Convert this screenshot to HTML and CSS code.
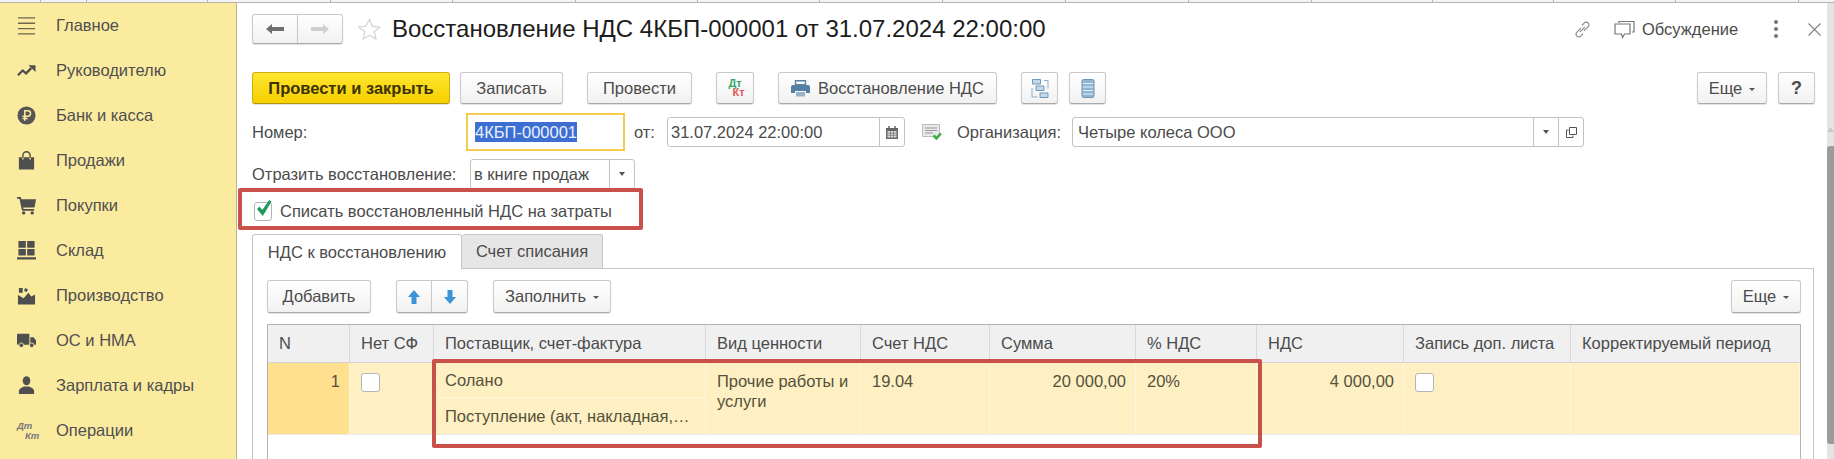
FILE: index.html
```html
<!DOCTYPE html>
<html lang="ru">
<head>
<meta charset="utf-8">
<title>Восстановление НДС</title>
<link rel="stylesheet" href="styles.css">
</head>
<body>
<div class="app">
  <div class="strip"><i></i><i></i><i></i><i></i><i></i><i></i><i></i><i></i><i></i><i></i><i></i><i></i><i></i><i></i><i></i><i></i></div>
  <div class="main">
    <nav class="side">
      <a class="nav"><svg class="ni" viewBox="0 0 20 20"><path d="M1 2h18M1 7.600h18M1 13.200h18M1 18.800h18" stroke="#6b6850" stroke-width="1.400" fill="none"/></svg>Главное</a>
      <a class="nav"><svg class="ni" viewBox="0 0 20 20"><path d="M1 15l5-5 3.500 3L15 7.500" stroke="#4f4f4f" stroke-width="2.400" fill="none"/><path d="M12 4.500H19.500V11.500z" fill="#4f4f4f"/></svg>Руководителю</a>
      <a class="nav"><svg class="ni" viewBox="0 0 20 20"><circle cx="10" cy="10" r="9.500" fill="#555"/><path d="M8.200 15.500V5h3.200a2.800 2.800 0 0 1 0 5.700H5.800M5.800 13.200h5.400" stroke="#fbeb9f" stroke-width="1.600" fill="none"/></svg>Банк и касса</a>
      <a class="nav"><svg class="ni" viewBox="0 0 20 20"><path d="M2 6.500h3.500V9h1.400V6.500h6.200V9h1.400V6.500H18v13H2z" fill="#4f4f4f"/><path d="M6.200 7V4.500a3.800 3.800 0 0 1 7.600 0V7" stroke="#4f4f4f" stroke-width="1.500" fill="none"/></svg>Продажи</a>
      <a class="nav"><svg class="ni" viewBox="0 0 20 20"><path d="M0 1h4l.6 2.500H20l-1.500 8.500H6.500l.4 1.800H18V15.500H5.300L2.600 2.800H0z" fill="#4f4f4f"/><circle cx="7" cy="17.800" r="1.800" fill="#4f4f4f"/><circle cx="16" cy="17.800" r="1.800" fill="#4f4f4f"/></svg>Покупки</a>
      <a class="nav"><svg class="ni" viewBox="0 0 20 20"><path d="M1.500 0h7.800v7h-7.800zM10.700 0h7.800v7h-7.800zM1.500 8.300h7.800v7h-7.800zM10.700 8.300h7.800v7h-7.800zM0 17.200h20v2.200H0z" fill="#4f4f4f"/></svg>Склад</a>
      <a class="nav"><svg class="ni" viewBox="0 0 20 20"><path d="M1 9.500l6 3.500 5-6 3 4 4-2v10.500H1z" fill="#4f4f4f"/><path d="M2 2h4v5H2zM8.500 2l3 1.500-1.500 3-2.500-1.500z" fill="#4f4f4f"/></svg>Производство</a>
      <a class="nav"><svg class="ni" viewBox="0 0 20 20"><path d="M.8 3h12.200v11.500H.8a.8.8 0 0 1-.8-.8V3.800A.8.8 0 0 1 .8 3zM14 6.500h3.500L20 10v4.500h-6z" fill="#4f4f4f"/><circle cx="4.500" cy="15" r="2.400" fill="#4f4f4f" stroke="#fbeb9f" stroke-width=".9"/><circle cx="15.500" cy="15" r="2.400" fill="#4f4f4f" stroke="#fbeb9f" stroke-width=".9"/></svg>ОС и НМА</a>
      <a class="nav"><svg class="ni" viewBox="0 0 20 20"><ellipse cx="10" cy="5" rx="4" ry="4.800" fill="#4f4f4f"/><path d="M2 18.500v-3c0-2 3-3.500 5.500-4.500h5c2.500 1 5.500 2.500 5.500 4.500v3a.5.5 0 0 1-.5.5h-15z" fill="#4f4f4f"/></svg>Зарплата и кадры</a>
      <a class="nav"><span class="dk dk-grey"><b>Дт</b><b>Кт</b></span>Операции</a>
    </nav>
    <section class="content">
      <header class="head">
        <div class="split">
          <button class="btn nb"><svg viewBox="0 0 18 12" class="arr"><path d="M0 6l6-5v3h12v4H6v3z" fill="#6e6e6e"/></svg></button>
          <button class="btn nb"><svg viewBox="0 0 18 12" class="arr"><path d="M18 6l-6-5v3H0v4h12v3z" fill="#cfcfcf"/></svg></button>
        </div>
        <svg class="star" viewBox="0 0 22 22"><path d="M11 1.500l2.800 6.500 7 .6-5.300 4.600 1.600 6.900-6.100-3.700-6.100 3.700 1.600-6.900L.2 8.600l7-.6z" fill="none" stroke="#d4d4d4" stroke-width="1.200"/></svg>
        <h1 class="title">Восстановление НДС 4КБП-000001 от 31.07.2024 22:00:00</h1>
        <div class="head-right">
          <svg class="hlink" viewBox="0 0 20 20"><path d="M8.500 8.500l-5 5a3 3 0 0 0 4 4l3-3M11.500 11.500l5-5a3 3 0 0 0-4-4l-3 3M7.500 12.500l5-5" fill="none" stroke="#8a8a8a" stroke-width="1.200"/></svg>
          <svg class="hchat" viewBox="0 0 21 19"><path d="M5 3V1.500h15V12h-2" fill="none" stroke="#777" stroke-width="1.200"/><path d="M1 4h15v10H10.500l-2 3.500-1-3.500H1z" fill="none" stroke="#777" stroke-width="1.200"/></svg>
          <span class="disc">Обсуждение</span>
          <span class="dots"><i></i><i></i><i></i></span>
          <svg class="close" viewBox="0 0 13 13"><path d="M.5.500l12 12M12.500.500l-12 12" stroke="#808080" stroke-width="1.100"/></svg>
        </div>
      </header>

      <div class="toolbar">
        <button class="btn primary w-post">Провести и закрыть</button>
        <button class="btn w-save">Записать</button>
        <button class="btn w-conduct">Провести</button>
        <button class="btn w-dk"><span class="dk dk-color"><b>Дт</b><b>Кт</b></span></button>
        <button class="btn w-print"><svg class="printer" viewBox="0 0 19 17"><path d="M4.500 .7h10v4h-10z" fill="none" stroke="#5e7f9f" stroke-width="1.400"/><path d="M2 5h15a2 2 0 0 1 2 2v6h-4v-2H4v2H0V7a2 2 0 0 1 2-2z" fill="#5580a6"/><path d="M5 12h9v4.500H5z" fill="#9ab2c8"/></svg>Восстановление НДС</button>
        <button class="btn w-icon"><svg class="ti" viewBox="0 0 18 19"><path d="M1.500.500h8v4.500h-8zM5 7h8v4.500H5zM9 14h8v4.500H9z" fill="#c3d8e9" stroke="#6b9abf"/><path d="M13 1.500h4v8M1 9v9h5.500" fill="none" stroke="#8cb0cc"/></svg></button>
        <button class="btn w-icon2"><svg class="ti" viewBox="0 0 18 19"><rect x="3" y=".5" width="12" height="18" rx="1.500" fill="#94b5d0" stroke="#6f96b6"/><path d="M4 4.500h10M4 8h10M4 11.500h10M4 15h10" stroke="#e4edf4"/></svg></button>
        <span class="tb-right">
          <button class="btn w-more">Еще<i class="caret"></i></button>
          <button class="btn w-help">?</button>
        </span>
      </div>

      <div class="form-row r1">
        <label class="lbl l-num">Номер:</label>
        <div class="num-input"><span class="sel">4КБП-000001</span></div>
        <label class="lbl l-from">от:</label>
        <div class="field f-date"><span class="val">31.07.2024 22:00:00</span><span class="cell"><svg class="cal" viewBox="0 0 12 13"><path d="M0 2h12v11H0z" fill="#666"/><path d="M3 0v2M9 0v2" stroke="#666" stroke-width="1.500"/><path d="M1.500 5h9v6.500h-9z" fill="#d8d8d8"/><path d="M1.500 7.200h9M1.500 9.300h9M4.500 5v6.500M7.500 5v6.500" stroke="#666" stroke-width=".6"/></svg></span></div>
        <svg class="doc-ok" viewBox="0 0 20 17"><path d="M.500.500h17v12H.500z" fill="#e9e9e9" stroke="#bbb"/><path d="M3 4h12M3 6.500h12M3 9h8" stroke="#999"/><path d="M10.500 12.500l2-2 2 2 3.500-4 1.800 1.800-5.300 6z" fill="#3fae49"/></svg>
        <label class="lbl l-org">Организация:</label>
        <div class="field f-org"><span class="val">Четыре колеса ООО</span><span class="cell"><i class="tri"></i></span><span class="cell"><svg class="open" viewBox="0 0 11 11"><path d="M3.500.500h7v7h-7z" fill="none" stroke="#555"/><path d="M2.500 3H.500v7.500H7V8.500" fill="none" stroke="#555"/></svg></span></div>
      </div>

      <div class="form-row r2">
        <label class="lbl l-refl">Отразить восстановление:</label>
        <div class="field f-refl"><span class="val">в книге продаж</span><span class="cell"><i class="tri"></i></span></div>
      </div>

      <div class="check-row">
        <span class="cb"><svg class="tick" viewBox="0 0 16 17"><path d="M1 9l2.500-2.500L6.300 10 13.200 0 15.500 1.500 6.800 16z" fill="#1d9a58"/></svg></span>
        <span class="lbl">Списать восстановленный НДС на затраты</span>
      </div>

      <div class="tabs">
        <span class="tab active">НДС к восстановлению</span>
        <span class="tab">Счет списания</span>
      </div>
      <div class="panel">
        <div class="tbl-bar">
          <button class="btn w-add">Добавить</button>
          <div class="split s2">
            <button class="btn ud"><svg class="updown" viewBox="0 0 12 14"><path d="M6 0l6 7H8.500v7h-5V7H0z" fill="#3c93d6"/></svg></button>
            <button class="btn ud"><svg class="updown" viewBox="0 0 12 14"><path d="M6 14l6-7H8.500V0h-5v7H0z" fill="#3c93d6"/></svg></button>
          </div>
          <button class="btn w-fill">Заполнить<i class="caret"></i></button>
          <button class="btn w-more2">Еще<i class="caret"></i></button>
        </div>
        <div class="grid">
          <div class="th">N</div>
          <div class="th">Нет СФ</div>
          <div class="th">Поставщик, счет-фактура</div>
          <div class="th">Вид ценности</div>
          <div class="th">Счет НДС</div>
          <div class="th">Сумма</div>
          <div class="th">% НДС</div>
          <div class="th">НДС</div>
          <div class="th">Запись доп. листа</div>
          <div class="th">Корректируемый период</div>

          <div class="td num cur">1</div>
          <div class="td chk"><span class="box"></span></div>
          <div class="td stack"><span class="sub">Солано</span><span class="sub">Поступление (акт, накладная,…</span></div>
          <div class="td">Прочие работы и услуги</div>
          <div class="td">19.04</div>
          <div class="td num">20 000,00</div>
          <div class="td">20%</div>
          <div class="td num">4 000,00</div>
          <div class="td chk"><span class="box"></span></div>
          <div class="td"></div>
        </div>
      </div>
    </section>
    <aside class="scroll"><i class="up"></i><i class="thumb"></i></aside>
  </div>
  <div class="mark m1"></div>
  <div class="mark m2"></div>
</div>
</body>
</html>
```

FILE: styles.css
```css
* { box-sizing: border-box; }
html, body { margin: 0; padding: 0; background: #fff; }
body { font-family: "Liberation Sans", Arial, sans-serif; font-size: 16.500px; color: #4b4b4b; }
.app { position: relative; width: 1834px; height: 459px; overflow: hidden; display: flex; flex-direction: column; }

.strip { height: 3px; flex: none; display: grid; border-bottom: 1px solid #b4b4b4; background: #f4f4f4;
  grid-template-columns: 41px 46px 121px 123px 122px 123px 122px 122px 123px 123px 123px 123px 121px 121px 122px 123px 35px; }
.strip i { border-right: 1px solid #b4b4b4; }

.main { flex: 1; display: flex; min-height: 0; }
.side { width: 237px; flex: none; background: #fbeb9f; border-right: 1px solid #b9b39a; }
.nav { height: 45px; display: flex; align-items: center; color: #4f4f4f; padding-left: 17px; }
.ni { width: 19px; height: 19px; flex: none; margin-right: 20px; }
.dk { display: flex; flex-direction: column; font-size: 9.500px; line-height: 10px; font-weight: 700; }
.dk b { display: block; }
.dk b + b { margin-left: 8px; }
.dk-grey { width: 19px; margin-right: 20px; color: #777; font-style: italic; }
.dk-color { font-size: 11px; line-height: 9px; }
.dk-color b:first-child { color: #35a869; }
.dk-color b + b { color: #e2574f; margin-left: 7px; }

.content { flex: 1; min-width: 0; padding-left: 15px; display: flex; flex-direction: column; }

.btn { font: inherit; color: #4b4b4b; height: 32px; padding: 0; border: 1px solid #c9c9c9; border-bottom-color: #a9a9a9; border-radius: 3px;
  background: linear-gradient(#ffffff, #f1f1f1); box-shadow: 0 1px 1px rgba(0,0,0,.12); display: inline-flex; align-items: center; justify-content: center; flex: none; }

.head { height: 30px; margin-top: 11px; display: flex; align-items: center; flex: none; }
.split { display: flex; }
.split .btn + .btn { border-left: 1px solid #c9c9c9; margin-left: -1px; border-radius: 0 3px 3px 0; }
.split .btn:first-child { border-radius: 3px 0 0 3px; }
.nb { height: 30px; width: 46px; }
.nb + .nb { width: 46px; }
.arr { width: 18px; height: 12px; }
.star { width: 23px; height: 23px; margin-left: 15px; flex: none; }
.title { margin: 0 0 0 11px; font-size: 24px; font-weight: 400; color: #1c1c1c; white-space: nowrap; line-height: 30px; }
.head-right { margin-left: auto; display: flex; align-items: center; width: 254px; flex: none; }
.hlink { width: 19px; height: 19px; margin-right: 22px; flex: none; }
.hchat { width: 21px; height: 19px; margin-right: 7px; flex: none; }
.disc { width: 97px; white-space: nowrap; flex: none; }
.dots { display: flex; flex-direction: column; gap: 3px; margin-left: 35px; flex: none; }
.dots i { width: 4px; height: 4px; border-radius: 50%; background: #777; }
.close { width: 13px; height: 13px; margin-left: 30px; flex: none; }

.toolbar { display: flex; align-items: center; height: 32px; margin-top: 28px; flex: none; }
.primary { background: linear-gradient(#ffe62e, #f5cf00); border-color: #cfae10; border-bottom-color: #b3960a; color: #3c3200; font-weight: 700; }
.w-post { width: 198px; }
.w-save { width: 103px; margin-left: 10px; }
.w-conduct { width: 105px; margin-left: 24px; }
.w-dk { width: 38px; margin-left: 24px; }
.w-print { width: 219px; margin-left: 24px; }
.w-icon { width: 37px; margin-left: 24px; }
.w-icon2 { width: 37px; margin-left: 11px; }
.printer { width: 19px; height: 17px; margin-right: 8px; }
.ti { width: 18px; height: 19px; }
.tb-right { margin-left: auto; display: flex; gap: 11px; margin-right: 12px; }
.w-more { width: 70px; }
.w-help { width: 37px; font-weight: 700; font-size: 18px; }
.caret { width: 0; height: 0; border: 3px solid transparent; border-top: 3px solid #555; border-bottom: 0; margin-left: 7px; margin-top: 2px; }

.form-row { display: flex; align-items: center; flex: none; }
.lbl { white-space: nowrap; }
.r1 { height: 38px; margin-top: 9px; }
.r2 { height: 30px; margin-top: 8px; }
.l-num { width: 214px; }
.num-input { width: 159px; height: 38px; border: 2px solid #f4cb4a; display: flex; align-items: center; padding-left: 7px; }
.sel { background: #3c6fd1; color: #e9efff; line-height: 20px; }
.l-from { width: 33px; margin-left: 9px; }
.field { height: 30px; border: 1px solid #c3c3c3; border-radius: 3px; display: flex; align-items: stretch; flex: none; }
.val { flex: 1; padding-left: 3px; line-height: 28px; white-space: nowrap; }
.f-org .val { padding-left: 5px; }
.cell { width: 25px; border-left: 1px solid #c3c3c3; display: flex; align-items: center; justify-content: center; flex: none; }
.f-date { width: 238px; }
.f-org { width: 512px; margin-left: 11px; }
.f-refl { width: 165px; margin-left: 0; }
.cal { width: 12px; height: 13px; }
.doc-ok { width: 20px; height: 17px; margin-left: 17px; flex: none; margin-right: 15px; }
.l-org { width: 104px; }
.tri { width: 0; height: 0; border: 3px solid transparent; border-top: 4px solid #555; border-bottom: 0; }
.open { width: 11px; height: 11px; }
.l-refl { width: 218px; }

.check-row { height: 45px; display: flex; align-items: center; padding-left: 2px; flex: none; }
.cb { width: 18px; height: 19px; border: 1px solid #b5b5b5; border-radius: 3px; background: #fff; margin-right: 8px; display: block; flex: none; }
.tick { display: block; width: 16px; height: 17px; margin: -3px 0 0 1px; }

.tabs { display: flex; height: 34px; flex: none; }
.tab { height: 34px; display: flex; align-items: center; justify-content: center; border: 1px solid #c6c6c6; border-bottom: 0; border-radius: 3px 3px 0 0; white-space: nowrap; }
.tab.active { width: 210px; background: #fff; height: 35px; margin-bottom: -1px; position: relative; z-index: 1; }
.tab:not(.active) { width: 141px; background: #e6e6e6; border-left: 0; }

.panel { flex: 1; width: 1562px; border: 1px solid #c6c6c6; border-bottom: 0; padding: 11px 12px 0 14px; }
.tbl-bar { display: flex; height: 33px; }
.tbl-bar .btn { height: 33px; }
.w-add { width: 104px; }
.s2 { margin-left: 25px; }
.ud { width: 36px; }
.ud + .ud { width: 37px; }
.updown { width: 12px; height: 14px; }
.w-fill { width: 118px; margin-left: 25px; }
.w-more2 { width: 70px; margin-left: auto; }

.grid { display: grid; margin-top: 11px; width: 1534px; border: 1px solid #b4b4b4; border-bottom: 0; height: 135px; align-content: start;
  grid-template-columns: 82px 84px 272px 155px 129px 146px 121px 147px 167px 229px; grid-template-rows: 38px 72px; }
.th { background: #f0f0f0; border-right: 1px solid #d8d8d8; border-bottom: 1px solid #d4d4d4; padding-left: 11px; line-height: 37px; white-space: nowrap; }
.th:nth-child(10) { border-right: 0; }
.td { background: #fef0c3; border-right: 1px solid #fff8df; border-bottom: 1px solid #e8e8e8; padding: 8px 11px 0; line-height: 20px; color: #55503c; }
.td.num { text-align: right; padding-right: 9px; }
.td.cur { background: #fee08f; }
.td.chk { padding: 10px 0 0 11px; }
.box { display: block; width: 19px; height: 19px; background: #fff; border: 1px solid #b5b5b5; border-radius: 3px; }
.td.stack { padding: 0; display: flex; flex-direction: column; }
.sub { height: 34px; padding: 0 11px; line-height: 34px; white-space: nowrap; }
.sub + .sub { border-top: 1px solid #fff8df; height: 36px; line-height: 36px; }

.scroll { width: 7px; flex: none; display: flex; flex-direction: column; align-items: stretch; background: #e4e4e4; }
.up { height: 0; border: 3px solid transparent; border-bottom: 4px solid #c8c8c8; border-top: 0; margin-top: 125px; }
.thumb { height: 298px; background: #9c9c9c; border-radius: 3px 0 0 3px; margin-top: 14px; }

.mark { position: absolute; border: 4px solid #c8524b; border-radius: 2px; pointer-events: none; }
.m1 { left: 238px; top: 188px; width: 405px; height: 42px; }
.m2 { left: 432px; top: 359px; width: 830px; height: 89px; }
```
